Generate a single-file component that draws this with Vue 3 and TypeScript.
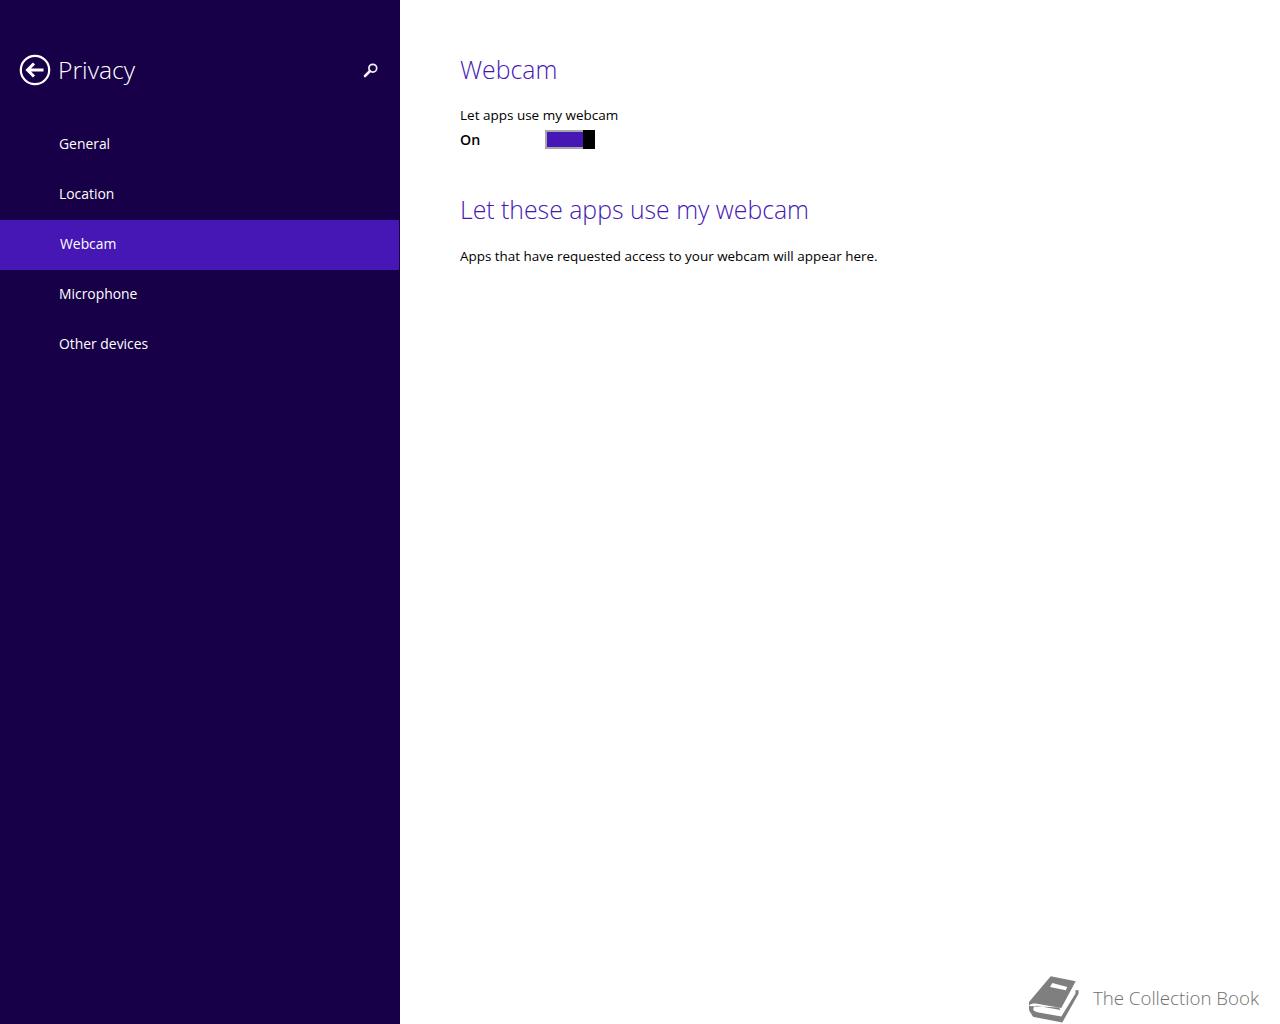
<script setup lang="ts">
interface NavItem { label: string; active?: boolean }
const items: NavItem[] = [
  { label: 'General' },
  { label: 'Location' },
  { label: 'Webcam', active: true },
  { label: 'Microphone' },
  { label: 'Other devices' },
]
</script>

<template>
  <div class="screen">
    <aside class="side">
      <header class="side-head">
        <svg class="back" width="32" height="32" viewBox="0 0 32 32" fill="none" stroke="#fff">
          <circle cx="16" cy="16" r="14.2" stroke-width="2.2" />
          <path d="M24.5 16H9M15 9.500 8.500 16l6.500 6.500" stroke-width="3" />
        </svg>
        <h1 class="side-title">Privacy</h1>
        <svg class="search" width="16" height="16" viewBox="0 0 16 16" fill="none" stroke="#f4f0fa">
          <circle cx="9.800" cy="6.200" r="3.900" stroke-width="1.700" />
          <path d="M7 9 2 14" stroke-width="2.600" stroke-linecap="round" />
        </svg>
      </header>
      <nav class="nav">
        <div v-for="item in items" :key="item.label" class="nav-item" :class="{ active: item.active }">{{ item.label }}</div>
      </nav>
    </aside>
    <main class="content">
      <h2 class="h-first">Webcam</h2>
      <div class="label">Let apps use my webcam</div>
      <div class="toggle-row">
        <span class="state">On</span>
        <span class="toggle"><span class="fill"></span><span class="thumb"></span></span>
      </div>
      <h2 class="h-second">Let these apps use my webcam</h2>
      <p class="note">Apps that have requested access to your webcam will appear here.</p>
    </main>
    <div class="brand">
      <svg width="60" height="52" viewBox="0 0 60 52" fill="#7f7f7f">
        <path d="M26.700 4.300 51.700 9.300 37.300 36 13 31.800C10 31.300 7 31.800 5 33.500V30Z" />
        <path d="M5 34C4.500 37 5.500 40 7.300 41.700 8 43.500 9 44.700 10 45L38.300 50.500 54.500 21.700 54.500 18 51.500 18.300 51.500 21.500 37.300 44.500 13.300 40.200C10.500 39.500 9 38.500 9.300 37 9.600 35 11 33.800 13.300 33.800L36.500 38 35 35.500Z" />
        <path d="M28.300 11 43.300 15 41.700 18.300 26 15Z" fill="#fff" />
      </svg>
      <span class="brand-text">The Collection Book</span>
    </div>
  </div>
</template>

<style>
html, body { margin: 0; background: #fff; }
</style>

<style scoped>
.screen {
  display: flex;
  position: relative;
  width: 1280px;
  height: 1024px;
  overflow: hidden;
  font-family: "Open Sans", "Noto Sans", sans-serif;
  background: #fff;
}
.side {
  width: 400px;
  height: 1024px;
  background: #180048;
  flex: none;
}
.side-head {
  display: flex;
  align-items: center;
  height: 120px;
  padding: 20px 21px 0 19px;
  box-sizing: border-box;
}
.back { flex: none; margin-bottom: 1px; }
.side-title {
  margin: 0 0 0 7px;
  flex: 1;
  font-size: 24.700px;
  font-weight: 300;
  color: #fff;
  line-height: 36px;
}
.search { flex: none; }
.nav-item {
  height: 50px;
  width: 399px;
  padding: 0 0 4px 59px;
  box-sizing: border-box;
  display: flex;
  align-items: center;
  font-size: 13.900px;
  color: #fff;
}
.nav-item.active { background: #4617b4; padding-left: 60px; }
.content {
  flex: 1;
  padding: 51px 0 0 60px;
}
h2 {
  margin: 0;
  font-weight: 300;
  font-size: 24.800px;
  line-height: 36px;
  color: #4617b4;
}
.label {
  margin-top: 18px;
  font-size: 13.500px;
  line-height: 20px;
  color: #000;
}
.toggle-row {
  display: flex;
  align-items: center;
  height: 20px;
  margin-top: 4px;
}
.state {
  width: 85px;
  font-size: 14.200px;
  font-weight: 600;
  color: #000;
}
.toggle {
  display: flex;
  width: 50px;
  height: 19px;
  box-sizing: border-box;
  border: 2px solid #a6a6a6;
  border-right: 0;
  position: relative;
}
.fill { flex: 1; background: #4617b4; }
.thumb { width: 12px; height: 19px; margin-top: -2px; background: #000; }
.h-second { margin-top: 42px; }
.note {
  margin: 19px 0 0;
  font-size: 13.450px;
  line-height: 20px;
  color: #000;
}
.brand {
  position: absolute;
  right: 21px;
  bottom: 0;
  display: flex;
  align-items: center;
  gap: 9px;
}
.brand-text {
  font-size: 18.700px;
  font-weight: 300;
  color: #707070;
  margin-bottom: 2px;
}
</style>
